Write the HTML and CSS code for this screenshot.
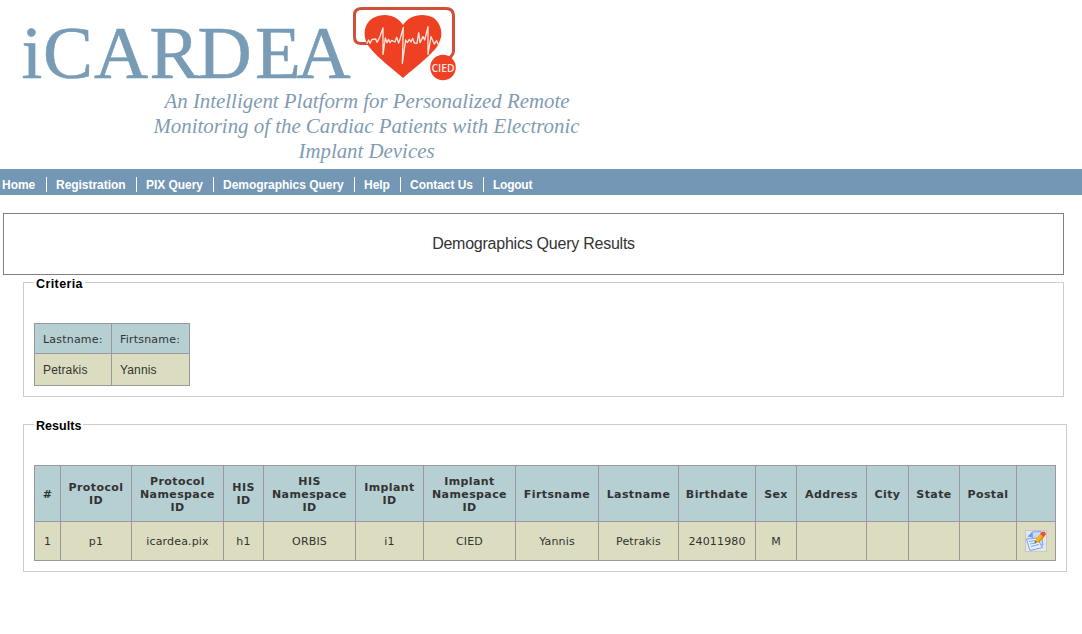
FILE: index.html
```
<!DOCTYPE html>
<html lang="en">
<head>
<meta charset="utf-8">
<title>iCARDEA - Demographics Query Results</title>
<link rel="stylesheet" href="styles.css">
</head>
<body>
<header class="banner">
  <svg class="brand" width="600" height="169" viewBox="0 0 600 169">
    <text class="brand-name" x="21.500 43 94 149.500 197.500 255 296.500" y="77.500">iCARDEA</text>
    <g class="brand-tagline">
      <text x="164.500" y="108" textLength="405" lengthAdjust="spacingAndGlyphs">An Intelligent Platform for Personalized Remote</text>
      <text x="153.500" y="133" textLength="426" lengthAdjust="spacingAndGlyphs">Monitoring of the Cardiac Patients with Electronic</text>
      <text x="298.500" y="158" textLength="136" lengthAdjust="spacingAndGlyphs">Implant Devices</text>
    </g>
    <path class="lead" d="M368 43.500H361Q354.500 43.500 354.500 37V15Q354.500 8.500 362 8.500H446Q453.500 8.500 453.500 16V51Q453.500 55 449 58"/>
    <path class="heart" d="M403 78C393 69 378 58 370 48C362 38 363 24 373 18C384 12 397 15 403 25C409 15 423 12 434 18C443 25 444 39 436 48C428 58 413 69 403 78Z"/>
    <path class="pulse" transform="translate(340 0) scale(.33333)" d="M80 131L86 120L90 130L96 118L107 117L111 127L119 112L129 84L129 163L136 114L141 128L146 118L150 128L155 121L165 126L170 112L176 129L180 118L190 82L187 190L197 120L202 128L208 118L213 126L218 115L223 129L231 130L236 98L240 128L249 110L254 120L264 80L264 163L273 110L283 132L290 122L296 137L304 115"/>
    <circle class="badge" cx="443" cy="67.500" r="12.800"/>
    <text class="badge-label" x="431.500" y="72" textLength="23" lengthAdjust="spacingAndGlyphs">CIED</text>
  </svg>
</header>
<nav>
  <ul class="menu">
    <li class="home"><span>Home</span></li>
    <li class="registration"><span>Registration</span></li>
    <li class="pix"><span>PIX Query</span></li>
    <li class="demographics"><span>Demographics Query</span></li>
    <li class="help"><span>Help</span></li>
    <li class="contact"><span>Contact Us</span></li>
    <li class="logout"><span>Logout</span></li>
  </ul>
</nav>
<main>
  <h1>Demographics Query Results</h1>
  <fieldset class="criteria">
    <legend>Criteria</legend>
    <table>
      <colgroup><col class="c-last"><col class="c-first"></colgroup>
      <tr class="head"><td>Lastname:</td><td>Firtsname:</td></tr>
      <tr class="values"><td>Petrakis</td><td>Yannis</td></tr>
    </table>
  </fieldset>
  <fieldset class="results">
    <legend>Results</legend>
    <table>
      <colgroup>
        <col class="w-num"><col class="w-protocol"><col class="w-namespace"><col class="w-his"><col class="w-namespace"><col class="w-implant"><col class="w-namespace"><col class="w-first"><col class="w-last"><col class="w-birth"><col class="w-sex"><col class="w-address"><col class="w-city"><col class="w-state"><col class="w-postal"><col class="w-edit">
      </colgroup>
      <tr>
        <th>#</th><th>Protocol<br>ID</th><th>Protocol<br>Namespace<br>ID</th><th>HIS<br>ID</th><th>HIS<br>Namespace<br>ID</th><th>Implant<br>ID</th><th>Implant<br>Namespace<br>ID</th><th>Firtsname</th><th>Lastname</th><th>Birthdate</th><th>Sex</th><th>Address</th><th>City</th><th>State</th><th>Postal</th><th></th>
      </tr>
      <tr>
        <td>1</td><td>p1</td><td>icardea.pix</td><td>h1</td><td>ORBIS</td><td>i1</td><td>CIED</td><td>Yannis</td><td>Petrakis</td><td>24011980</td><td>M</td><td></td><td></td><td></td><td></td>
        <td class="action">
          <svg class="edit" width="22" height="22" viewBox="0 0 22 22">
            <rect x=".5" y=".5" width="21" height="21" fill="#e6e8e4" stroke="#c8c9cc"/>
            <path d="M7 2L16 1.500L18 15L9 16Z" fill="#c5dcfb" stroke="#7ba0ec"/>
            <path d="M7 2L2.500 6.500L7 7.500Z" fill="#6f9cf0"/>
            <path d="M1.500 9L12 8L17.500 17.500L5 20.500Z" fill="#e6f0ff" stroke="#7e9ee8"/>
            <path d="M4 11.500L10 10.500M5 14L11 13M6 16.500L14 14.500" stroke="#7aa5ee" stroke-width="1.200"/>
            <path d="M9.500 13L11 8.500L16 3L19.500 6L14 12Z" fill="#fcb316"/>
            <path d="M12.500 12.500L18.500 5.500L19.500 6.500L14 12.500Z" fill="#ea8508"/>
            <path d="M9.500 13L10.500 10.500L12 12.200Z" fill="#5b4636"/>
            <path d="M15 4L17.500 1.500Q21 1 20.800 4.500L18.500 7Z" fill="#ec5039"/>
          </svg>
        </td>
      </tr>
    </table>
  </fieldset>
</main>
</body>
</html>
```
FILE: styles.css
```
* { box-sizing: border-box; }
body {
  margin: 0;
  background: #fff;
  font-family: "Liberation Sans", Arial, sans-serif;
  color: #333;
}
.banner { height: 169px; background: #fff; }
.brand { display: block; }
.brand-name {
  font: 75px "Liberation Serif", serif;
  fill: #789bb6;
  stroke: #789bb6;
  stroke-width: .6px;
}
.brand-tagline {
  font: italic 21.500px "Liberation Serif", serif;
  fill: #7f9cb2;
}
.lead { fill: none; stroke: #cf5038; stroke-width: 3px; }
.heart, .badge { fill: #ee4023; }
.pulse { fill: none; stroke: #ffe4da; stroke-width: 4px; stroke-linejoin: round; }
.badge-label { font: 600 10.500px "Open Sans", sans-serif; fill: #ffe9e2; }

nav { height: 26px; background: #7497b5; padding-top: 8px; }
.menu {
  display: flex;
  margin: 0;
  padding: 0;
  list-style: none;
  font-size: 12px;
  font-weight: bold;
  line-height: 15px;
  letter-spacing: -.04px;
  color: #fff;
  white-space: nowrap;
}
.menu li { height: 15px; padding-left: 9px; border-right: 1px solid #fff; }
.menu span { display: block; padding-top: 1px; }
.menu .home { width: 47px; padding-left: 2px; }
.menu .registration { width: 90px; }
.menu .pix { width: 77px; }
.menu .demographics { width: 141px; }
.menu .help { width: 46px; }
.menu .contact { width: 83px; }
.menu .logout { border-right: 0; letter-spacing: -.25px; }

main { padding: 18px 0 0 3px; }
h1 {
  width: 1061px;
  height: 62px;
  margin: 0;
  border: 1px solid #808080;
  font-size: 16px;
  font-weight: normal;
  line-height: 60px;
  letter-spacing: -.24px;
  text-align: center;
}
fieldset {
  margin: 0 0 20px 20px;
  padding: 33px 10px 0;
  border: 1px solid #ccc;
}
.criteria { width: 1041px; height: 122px; }
.results { width: 1044px; height: 155px; }
legend {
  height: 15px;
  padding: 0 2px;
  font-size: 12.500px;
  font-weight: bold;
  line-height: 18px;
  color: #000;
}
.criteria legend { width: 51px; letter-spacing: .400px; }
.results legend { width: 49px; letter-spacing: .050px; }

table {
  border: solid #999;
  border-width: 1px 0 0 1px;
  border-spacing: 0;
  table-layout: fixed;
  font: 11px/13px "DejaVu Sans", Verdana, sans-serif;
}
th, td {
  padding: 0;
  border: solid #999;
  border-width: 0 1px 1px 0;
  text-align: center;
  white-space: nowrap;
  letter-spacing: .15px;
}
th { height: 56px; padding-top: 1px; background: #b5cfd2; letter-spacing: .4px; }
td { height: 39px; background: #dcddc0; }
.criteria table { width: 156px; }
.criteria td { padding-left: 8px; text-align: left; }
.criteria .head td { height: 30px; padding-top: 2px; background: #b5cfd2; letter-spacing: .2px; }
.criteria .values td { height: 32px; font: 12px/14px "Liberation Sans", Arial, sans-serif; }
.c-last { width: 77px; }
.c-first { width: 78px; }
.results table { width: 1022px; }
.w-num { width: 26px; }
.w-protocol { width: 71px; }
.w-namespace { width: 92px; }
.w-his { width: 40px; }
.w-implant { width: 68px; }
.w-first { width: 83px; }
.w-last { width: 80px; }
.w-birth { width: 77px; }
.w-sex { width: 41px; }
.w-address { width: 70px; }
.w-city { width: 42px; }
.w-state { width: 51px; }
.w-postal { width: 57px; }
.w-edit { width: 39px; }
.edit { display: block; margin-left: 8px; }
```
